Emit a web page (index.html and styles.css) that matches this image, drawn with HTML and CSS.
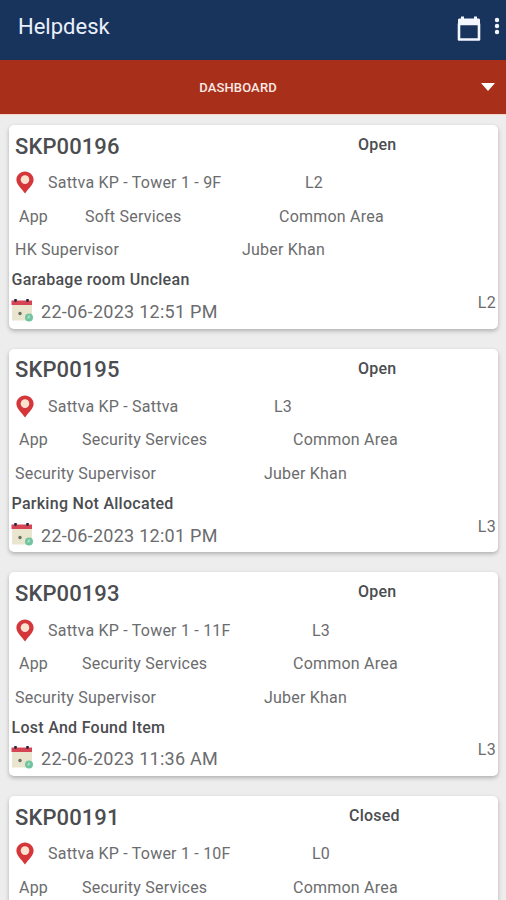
FILE: index.html
```
<!DOCTYPE html>
<html lang="en">
<head>
    <meta charset="utf-8">
    <meta name="viewport" content="width=device-width, initial-scale=1">
    <title>Helpdesk</title>
    <link rel="stylesheet" href="styles.css">
</head>
<body>
    <svg class="symbols" width="0" height="0">
        <symbol id="pin" viewBox="0 0 18 23">
            <path d="M9 .5C4.2.5.4 4.2.4 8.800c0 4.800 4.600 8 8.600 13.700 4-5.700 8.600-8.900 8.600-13.700C17.600 4.200 13.800.5 9 .5z" fill="#d4363a"/>
            <circle cx="9" cy="8.600" r="4.300" fill="#fbe3cf"/>
        </symbol>
        <symbol id="date" viewBox="0 0 22 23">
            <path d="M1 6h20v15.500H1z" fill="#e9e5cf"/>
            <path d="M.5 1.500h20.500V6H.5z" fill="#d64553"/>
            <path d="M4.500 .8v1M16.500.8v1" stroke="#26263a" stroke-width="2.600" stroke-linecap="round"/>
            <circle cx="9" cy="14.500" r="1.700" fill="#6b6b60"/>
            <circle cx="18" cy="18.500" r="4" fill="#72c4a1"/>
            <path d="M18 16.500v2.300h-1.500" fill="none" stroke="#d5eee2"/>
        </symbol>
    </svg>

    <div class="header">
        <h1>Helpdesk</h1>
        <svg class="calendar" width="24" height="26" viewBox="0 0 24 26">
            <path d="M2 8h20v15.500H2z" fill="none" stroke="#f5f7ff" stroke-width="2.600" stroke-linejoin="round"/>
            <path d="M2 2.500h20l1 1V8.500H1v-5zM4 .5h3v3H4zM17 .5h3v3h-3z" fill="#f5f7ff"/>
        </svg>
        <svg class="more" width="6" height="18" viewBox="0 0 6 18">
            <circle cx="3" cy="3" r="2.200"/>
            <circle cx="3" cy="9" r="2.200"/>
            <circle cx="3" cy="15" r="2.200"/>
        </svg>
    </div>

    <div class="dashboard">
        <span>DASHBOARD</span>
        <svg width="14" height="8" viewBox="0 0 14 8"><path d="M0 0h14L7 8z" fill="#fff"/></svg>
    </div>

    <div class="tickets">
        <div class="card soft tower-9">
            <div class="row title"><h2>SKP00196</h2><b>Open</b></div>
            <div class="row place"><svg class="pin"><use href="#pin"/></svg><span>Sattva KP - Tower 1 - 9F</span><span>L2</span></div>
            <div class="row service"><span>App</span><span>Soft Services</span><span>Common Area</span></div>
            <div class="row people"><span>HK Supervisor</span><span>Juber Khan</span></div>
            <div class="row issue">Garabage room Unclean</div>
            <div class="row time"><svg class="date"><use href="#date"/></svg><span>22-06-2023 12:51 PM</span><span class="level">L2</span></div>
        </div>

        <div class="card security sattva">
            <div class="row title"><h2>SKP00195</h2><b>Open</b></div>
            <div class="row place"><svg class="pin"><use href="#pin"/></svg><span>Sattva KP - Sattva</span><span>L3</span></div>
            <div class="row service"><span>App</span><span>Security Services</span><span>Common Area</span></div>
            <div class="row people"><span>Security Supervisor</span><span>Juber Khan</span></div>
            <div class="row issue">Parking Not Allocated</div>
            <div class="row time"><svg class="date"><use href="#date"/></svg><span>22-06-2023 12:01 PM</span><span class="level">L3</span></div>
        </div>

        <div class="card security">
            <div class="row title"><h2>SKP00193</h2><b>Open</b></div>
            <div class="row place"><svg class="pin"><use href="#pin"/></svg><span>Sattva KP - Tower 1 - 11F</span><span>L3</span></div>
            <div class="row service"><span>App</span><span>Security Services</span><span>Common Area</span></div>
            <div class="row people"><span>Security Supervisor</span><span>Juber Khan</span></div>
            <div class="row issue">Lost And Found Item</div>
            <div class="row time"><svg class="date"><use href="#date"/></svg><span>22-06-2023 11:36 AM</span><span class="level">L3</span></div>
        </div>

        <div class="card security closed">
            <div class="row title"><h2>SKP00191</h2><b>Closed</b></div>
            <div class="row place"><svg class="pin"><use href="#pin"/></svg><span>Sattva KP - Tower 1 - 10F</span><span>L0</span></div>
            <div class="row service"><span>App</span><span>Security Services</span><span>Common Area</span></div>
        </div>
    </div>
</body>
</html>
```
FILE: styles.css
```
* {
    box-sizing: border-box;
}
body {
    margin: 0;
    height: 900px;
    overflow: hidden;
    display: flex;
    flex-direction: column;
    background-color: #ededed;
    font-family: Roboto, sans-serif;
    color: #6b6c6e;
}
.symbols {
    display: none;
}
.header {
    flex: none;
    display: flex;
    align-items: flex-start;
    height: 60px;
    padding: 0 6px 0 18px;
    background-color: #19345c;
}
.header h1 {
    flex: 1;
    margin: 0;
    font-size: 22px;
    font-weight: 400;
    line-height: 53px;
    color: #e9f0fb;
}
.calendar {
    margin: 16px 13px 0 0;
}
.more {
    margin-top: 17px;
    fill: #f5f7ff;
}
.dashboard {
    flex: none;
    display: flex;
    align-items: center;
    height: 55px;
    padding-right: 11px;
    background-color: #a8301b;
    border-bottom: 1px solid #f6d5c8;
    color: #fbe9e4;
    font-size: 13px;
    font-weight: 500;
}
.dashboard span {
    flex: 1;
    padding-right: 5px;
    text-align: center;
    letter-spacing: 0.15px;
}
.tickets {
    flex: 1;
    min-height: 0;
    overflow: hidden;
    padding: 10px 8px 0 9px;
}
.card {
    height: 203.7px;
    margin-bottom: 20px;
    background-color: #fff;
    border-radius: 5px;
    box-shadow: 0 2px 4px rgba(0, 0, 0, 0.26);
    font-size: 16px;
    letter-spacing: 0.22px;
}
.closed {
    height: 110px;
    margin-bottom: 0;
    border-radius: 5px 5px 0 0;
}
.row {
    display: grid;
    align-items: center;
    height: 33.5px;
    white-space: nowrap;
}
.title {
    grid-template-columns: 343px 1fr;
    height: 41px;
    padding-left: 6px;
    color: #4b4d50;
}
.closed .title {
    grid-template-columns: 334px 1fr;
}
.title h2 {
    margin: 1px 0 0;
    font-size: 22px;
    font-weight: 500;
    letter-spacing: 0.1px;
}
.title b {
    margin-top: -2px;
    font-weight: 500;
}
.place {
    grid-template-columns: 32px 264px 1fr;
    padding-left: 7px;
}
.tower-9 .place {
    grid-template-columns: 32px 257px 1fr;
}
.sattva .place {
    grid-template-columns: 32px 226px 1fr;
}
.pin {
    width: 18px;
    height: 23px;
}
.service {
    grid-template-columns: 63px 211px 1fr;
    padding-left: 10px;
}
.soft .service {
    grid-template-columns: 66px 194px 1fr;
}
.people {
    grid-template-columns: 249px 1fr;
    padding-left: 6px;
}
.soft .people {
    grid-template-columns: 227px 1fr;
}
.issue {
    height: 26.5px;
    padding-left: 2.5px;
    font-weight: 500;
    letter-spacing: 0.28px;
    color: #4b4d50;
}
.time {
    grid-template-columns: 30px 1fr auto;
    height: 33px;
    padding: 0 2px 0 2px;
    font-size: 18px;
    letter-spacing: 0.26px;
}
.date {
    width: 22px;
    height: 23px;
    margin-bottom: 2px;
}
.level {
    margin-bottom: 18px;
    font-size: 16px;
}
```
